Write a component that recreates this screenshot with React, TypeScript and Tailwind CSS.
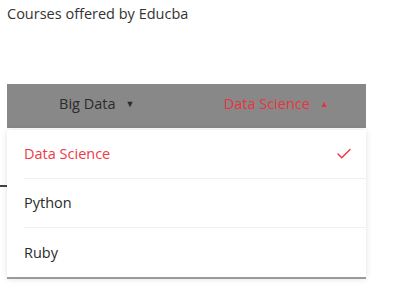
import { Check } from "lucide-react";

const items = ["Data Science", "Python", "Ruby"];

export default function App() {
  const selected = "Data Science";

  return (
    <div
      className="relative h-[291px] w-[398px] bg-white text-[14.5px] text-[#333]"
      style={{ fontFamily: '"Open Sans", "Noto Sans", sans-serif' }}
    >
      <p className="px-[7px] pt-[4px] leading-[20px]">Courses offered by Educba</p>

      <div className="relative mx-[7px] mt-[60px] w-[359px]">
        {/* tab bar */}
        <div className="flex h-[44px] bg-[#888888]">
          <button className="flex flex-1 items-center justify-center gap-[10px] pb-[5px] text-[#2b2b2b]">
            <span>Big Data</span>
            <span className="text-[9px]">▼</span>
          </button>
          <button className="flex flex-1 items-center justify-center gap-[10px] pb-[5px] text-[#e8343f]">
            <span>Data Science</span>
            <span className="text-[9px]">▲</span>
          </button>
        </div>

        {/* edge of the content under the menu */}
        <div className="absolute left-[-7px] top-[101px] h-[2px] w-[7px] bg-[#444]" />

        {/* dropdown */}
        <ul className="absolute left-0 top-[46px] w-[359px] border-b-2 border-[#9a9a9a] bg-white shadow-[0_0_6px_rgba(0,0,0,0.12)]">
          {items.map((item, i) => (
            <li key={item} className="pl-[17px]">
              <div
                className={`flex h-[49px] items-center justify-between pr-[13px] ${
                  i < items.length - 1 ? "border-b border-[#f0f0f0]" : ""
                } ${item === selected ? "text-[#ee3a46]" : "text-[#2b2b2b]"}`}
              >
                <span>{item}</span>
                {item === selected && <Check className="h-[18px] w-[18px]" strokeWidth={2} />}
              </div>
            </li>
          ))}
        </ul>
      </div>
    </div>
  );
}
